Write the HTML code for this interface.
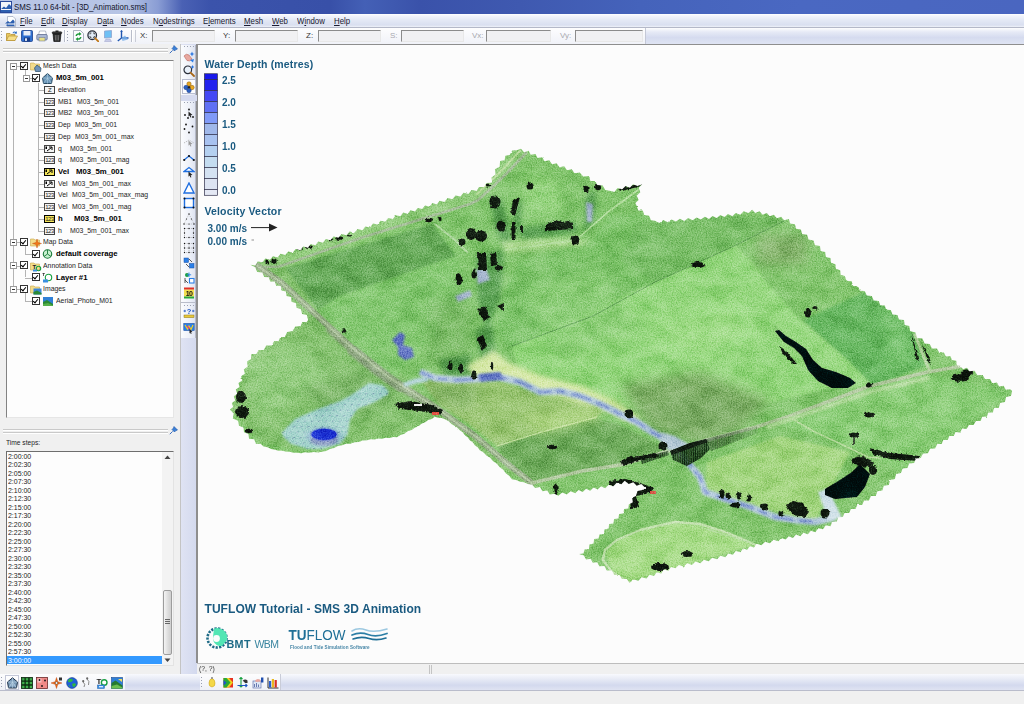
<!DOCTYPE html>
<html><head><meta charset="utf-8"><title>SMS 11.0 64-bit - [3D_Animation.sms]</title>
<style>
*{box-sizing:border-box}
html,body{margin:0;padding:0}
body{width:1024px;height:704px;overflow:hidden;position:relative;background:#f0f0f0;font-family:"Liberation Sans",sans-serif;font-size:9px;color:#222}
.abs{position:absolute}
#title{left:0;top:0;width:1024px;height:14px;background:linear-gradient(90deg,#b9c6e6 0,#b6c4e5 125px,#8a9dd4 158px,#4a61b4 182px,#3b53ab 210px,#3850a8 330px,#4460b6 365px,#3a52aa 420px,#3f59b0 520px,#4563bb 640px,#4a68c2 800px,#4a66c0 1024px)}
#title .t{left:14px;top:1px;font-size:9px;line-height:12px;color:#15152a;white-space:nowrap;transform:scaleX(.873);transform-origin:0 0}
#menubar{left:0;top:14px;width:1024px;height:14px;background:linear-gradient(180deg,#fff 0,#f2f4fb 15%,#e3e8f5 50%,#d9dff0 85%,#eef1f8 100%);border-bottom:1px solid #b4b8c8}
#menubar span{position:absolute;top:1px;font-size:9px;line-height:12px;color:#1a1a30;white-space:nowrap;transform:scaleX(.87);transform-origin:0 0}
#menubar u{text-decoration:underline}
#toolbar{left:0;top:28px;width:1024px;height:16px;background:linear-gradient(180deg,#fdfdfe 0,#e6eaf6 25%,#d5dbef 60%,#dfe4f3 100%)}
#toolbar .wl{position:absolute;left:0;top:0;width:646px;height:16px;background:linear-gradient(180deg,#fdfdfe 0,#f0f2f8 100%);border-right:1px solid #c4c8d6}
#toolbar .lbl{position:absolute;top:3px;font-size:8px;line-height:10px;color:#333}
#toolbar .lbl.dis{color:#a8a8b0}
#toolbar .inp{position:absolute;top:2px;height:12px;background:#f1f1f3;border-top:1px solid #8c8c8c;border-left:1px solid #8c8c8c;border-right:1px solid #e8e8e8;border-bottom:1px solid #e8e8e8}
#left{left:0;top:44px;width:180px;height:630px;background:#f0f0f0}
#tree{left:6px;top:60px;width:168px;height:358px;background:#fdfdfd;border-top:1px solid #828282;border-left:1px solid #828282;border-right:1px solid #e6e6e6;border-bottom:1px solid #e6e6e6}
.tr{position:absolute;white-space:nowrap;font-size:8px;line-height:10px;color:#333}
.tr.b{font-weight:bold;color:#000}
.cb{position:absolute;width:8px;height:8px;border:1px solid #333;background:#fff}
.cb:after{content:"";position:absolute;left:1px;top:0px;width:2px;height:4px;border-right:1.4px solid #000;border-bottom:1.4px solid #000;transform:rotate(40deg)}
.ex{position:absolute;width:7px;height:7px;border:1px solid #999;background:#fff}
.ex:after{content:"";position:absolute;left:1px;top:2px;width:3px;height:1px;background:#333}
.ic{position:absolute;width:11px;height:8px;border:1px solid #444;background:#f4f4f4;font-size:6px;line-height:6px;text-align:center;color:#222;letter-spacing:-0.5px;overflow:hidden}
.ic.y{background:#f2e45a}
#vsplit{left:179px;top:44px;width:2px;height:630px;background:#f0f0f0;border-right:1px solid #c4c4c4}
#vtool{left:181px;top:45px;width:15px;height:293px;background:linear-gradient(90deg,#fbfcfe 0,#eef1f8 60%,#dfe4f1 100%);border-right:1px solid #b5b9c8}
#vtoolbg{left:181px;top:44px;width:16px;height:630px;background:linear-gradient(90deg,#dfe3f3,#d3d9ee)}
#view{left:196px;top:44px;width:828px;height:619px;background:#fcfcfc;border-left:2px solid #8e8e8e;border-top:1px solid #8e8e8e}
#status{left:197px;top:663px;width:827px;height:11px;background:#f0f0f0;border-top:1px solid #bdbdbd}
#btool{left:0;top:674px;width:1024px;height:17px;background:linear-gradient(180deg,#f8f9fd 0,#e3e7f4 40%,#d3d9ee 70%,#dfe3f2 100%);border-bottom:1px solid #b9bccb}
#bottom{left:0;top:691px;width:1024px;height:13px;background:#f0f0f0}
.ts{position:absolute;left:8px;font-size:8px;line-height:8px;color:#222;white-space:nowrap;letter-spacing:-0.1px}
.lg{font-family:"Liberation Sans",sans-serif;font-weight:bold;fill:#1f5a82}
</style></head>
<body>
<div id="title" class="abs"><div class="abs t">SMS 11.0 64-bit - [3D_Animation.sms]</div></div>
<div id="menubar" class="abs">
<span style="left:20px"><u>F</u>ile</span><span style="left:41px"><u>E</u>dit</span><span style="left:62px"><u>D</u>isplay</span><span style="left:97px">D<u>a</u>ta</span><span style="left:121px"><u>N</u>odes</span><span style="left:153px">N<u>o</u>destrings</span><span style="left:203px">E<u>l</u>ements</span><span style="left:244px"><u>M</u>esh</span><span style="left:272px"><u>W</u>eb</span><span style="left:297px">W<u>i</u>ndow</span><span style="left:334px"><u>H</u>elp</span>
</div>
<div id="toolbar" class="abs"><div class="wl"></div>
<span class="lbl" style="left:140px">X:</span><div class="inp" style="left:152px;width:63px"></div>
<span class="lbl" style="left:223px">Y:</span><div class="inp" style="left:235px;width:63px"></div>
<span class="lbl" style="left:306px">Z:</span><div class="inp" style="left:318px;width:63px"></div>
<span class="lbl dis" style="left:390px">S:</span><div class="inp" style="left:401px;width:63px"></div>
<span class="lbl dis" style="left:472px">Vx:</span><div class="inp" style="left:486px;width:65px"></div>
<span class="lbl dis" style="left:560px">Vy:</span><div class="inp" style="left:575px;width:68px"></div>
</div>
<div id="left" class="abs"></div>
<div id="tree" class="abs"></div>
<div class="abs" style="left:3px;top:48px;width:165px;height:1px;background:#c9c9c9"></div><div class="abs" style="left:3px;top:49px;width:165px;height:1px;background:#fff"></div><div class="abs" style="left:3px;top:51px;width:165px;height:1px;background:#c9c9c9"></div><div class="abs" style="left:3px;top:52px;width:165px;height:1px;background:#fff"></div>
<svg class="abs" style="left:169px;top:45px" width="9" height="9" viewBox="0 0 9 9"><path d="M5,0.5 L8.5,4 L7,4.5 L5.5,6 L3,3.5 L4.5,2 Z" fill="#3b7fd6" stroke="#1d56a8" stroke-width=".6"/><path d="M3.6,5.4 L0.8,8.2" stroke="#3b6fc0" stroke-width="1"/></svg>
<div class="abs" style="left:3px;top:429px;width:165px;height:1px;background:#c9c9c9"></div><div class="abs" style="left:3px;top:430px;width:165px;height:1px;background:#fff"></div><div class="abs" style="left:3px;top:432px;width:165px;height:1px;background:#c9c9c9"></div><div class="abs" style="left:3px;top:433px;width:165px;height:1px;background:#fff"></div>
<svg class="abs" style="left:169px;top:426px" width="9" height="9" viewBox="0 0 9 9"><path d="M5,0.5 L8.5,4 L7,4.5 L5.5,6 L3,3.5 L4.5,2 Z" fill="#3b7fd6" stroke="#1d56a8" stroke-width=".6"/><path d="M3.6,5.4 L0.8,8.2" stroke="#3b6fc0" stroke-width="1"/></svg>
<div class="abs" style="left:13px;top:69.4px;width:1px;height:219.9px;background:#b4b4b4"></div>
<div class="abs" style="left:25px;top:70.4px;width:1px;height:4.7px;background:#b4b4b4"></div>
<div class="abs" style="left:38px;top:83.1px;width:1px;height:147.5px;background:#b4b4b4"></div>
<div class="abs" style="left:38px;top:89.9px;width:6px;height:1px;background:#b4b4b4"></div>
<div class="abs" style="left:38px;top:101.6px;width:6px;height:1px;background:#b4b4b4"></div>
<div class="abs" style="left:38px;top:113.3px;width:6px;height:1px;background:#b4b4b4"></div>
<div class="abs" style="left:38px;top:125.1px;width:6px;height:1px;background:#b4b4b4"></div>
<div class="abs" style="left:38px;top:136.8px;width:6px;height:1px;background:#b4b4b4"></div>
<div class="abs" style="left:38px;top:148.5px;width:6px;height:1px;background:#b4b4b4"></div>
<div class="abs" style="left:38px;top:160.2px;width:6px;height:1px;background:#b4b4b4"></div>
<div class="abs" style="left:38px;top:172.0px;width:6px;height:1px;background:#b4b4b4"></div>
<div class="abs" style="left:38px;top:183.7px;width:6px;height:1px;background:#b4b4b4"></div>
<div class="abs" style="left:38px;top:195.4px;width:6px;height:1px;background:#b4b4b4"></div>
<div class="abs" style="left:38px;top:207.2px;width:6px;height:1px;background:#b4b4b4"></div>
<div class="abs" style="left:38px;top:218.9px;width:6px;height:1px;background:#b4b4b4"></div>
<div class="abs" style="left:38px;top:230.6px;width:6px;height:1px;background:#b4b4b4"></div>
<div class="abs" style="left:16px;top:66.4px;width:4px;height:1px;background:#b4b4b4"></div>
<div class="abs" style="left:28px;top:78.1px;width:4px;height:1px;background:#b4b4b4"></div>
<div class="abs" style="left:13px;top:242.4px;width:3px;height:1px;background:#b4b4b4"></div>
<div class="abs" style="left:13px;top:265.8px;width:3px;height:1px;background:#b4b4b4"></div>
<div class="abs" style="left:13px;top:289.3px;width:3px;height:1px;background:#b4b4b4"></div>
<div class="abs" style="left:16px;top:242.4px;width:4px;height:1px;background:#b4b4b4"></div>
<div class="abs" style="left:16px;top:265.8px;width:4px;height:1px;background:#b4b4b4"></div>
<div class="abs" style="left:16px;top:289.3px;width:4px;height:1px;background:#b4b4b4"></div>
<div class="abs" style="left:25px;top:246.4px;width:1px;height:7.7px;background:#b4b4b4"></div>
<div class="abs" style="left:25px;top:254.1px;width:7px;height:1px;background:#b4b4b4"></div>
<div class="abs" style="left:25px;top:269.8px;width:1px;height:7.7px;background:#b4b4b4"></div>
<div class="abs" style="left:25px;top:277.5px;width:7px;height:1px;background:#b4b4b4"></div>
<div class="abs" style="left:25px;top:293.3px;width:1px;height:7.7px;background:#b4b4b4"></div>
<div class="abs" style="left:25px;top:301.0px;width:7px;height:1px;background:#b4b4b4"></div>
<div class="ex" style="left:10px;top:62.9px"></div>
<div class="cb" style="left:19.5px;top:61.9px"></div>
<svg class="abs" style="left:29.5px;top:61.4px" width="12" height="11" viewBox="0 0 12 11"><path d="M0.5,2 L4,2 L5,3 L9.5,3 L9.5,9 L0.5,9 Z" fill="#f3dc8a" stroke="#c9a94a" stroke-width=".6"/><path d="M7,4 L11,7 L10.5,10.5 L5.5,10.5 L4.5,7 Z" fill="#6f93b8" stroke="#244a66" stroke-width=".7"/></svg>
<span class="tr" style="left:43px;top:61.4px;font-size:8px;color:#1c1c1c;transform:scaleX(0.86);transform-origin:0 0;">Mesh Data</span>
<div class="ex" style="left:22.5px;top:74.6px"></div>
<div class="cb" style="left:32px;top:73.6px"></div>
<svg class="abs" style="left:42px;top:72.6px" width="11" height="11" viewBox="0 0 11 11"><path d="M5.5,0.5 L10.5,5 L9.5,10.5 L1.5,10.5 L0.5,5 Z" fill="#6a94b6" stroke="#1d4058" stroke-width=".9"/><path d="M5.5,0.5 L5.5,10.5 M0.5,5 L10.5,5 M1.5,10.5 L5.5,5 L9.5,10.5" stroke="#b8d8e8" stroke-width=".5" fill="none"/></svg>
<span class="tr b" style="left:56px;top:73.1px;font-size:8px;color:#000;transform:scaleX(0.97);transform-origin:0 0;">M03_5m_001</span>
<div class="ic" style="left:44px;top:85.9px;">Z</div>
<span class="tr" style="left:57.7px;top:84.9px;font-size:8px;color:#1c1c1c;transform:scaleX(0.86);transform-origin:0 0;">elevation</span>
<div class="ic" style="left:44px;top:97.6px;">123</div>
<span class="tr" style="left:57.7px;top:96.6px;font-size:8px;color:#1c1c1c;transform:scaleX(0.86);transform-origin:0 0;">MB1</span>
<span class="tr" style="left:76.5px;top:96.6px;font-size:8px;color:#1c1c1c;transform:scaleX(0.86);transform-origin:0 0;">M03_5m_001</span>
<div class="ic" style="left:44px;top:109.3px;">123</div>
<span class="tr" style="left:57.7px;top:108.3px;font-size:8px;color:#1c1c1c;transform:scaleX(0.86);transform-origin:0 0;">MB2</span>
<span class="tr" style="left:76.5px;top:108.3px;font-size:8px;color:#1c1c1c;transform:scaleX(0.86);transform-origin:0 0;">M03_5m_001</span>
<div class="ic" style="left:44px;top:121.1px;">123</div>
<span class="tr" style="left:57.7px;top:120.1px;font-size:8px;color:#1c1c1c;transform:scaleX(0.86);transform-origin:0 0;">Dep</span>
<span class="tr" style="left:75.1px;top:120.1px;font-size:8px;color:#1c1c1c;transform:scaleX(0.86);transform-origin:0 0;">M03_5m_001</span>
<div class="ic" style="left:44px;top:132.8px;">123</div>
<span class="tr" style="left:57.7px;top:131.8px;font-size:8px;color:#1c1c1c;transform:scaleX(0.86);transform-origin:0 0;">Dep</span>
<span class="tr" style="left:75.1px;top:131.8px;font-size:8px;color:#1c1c1c;transform:scaleX(0.86);transform-origin:0 0;">M03_5m_001_max</span>
<div class="ic" style="left:44px;top:144.5px;"><svg width="9" height="6" viewBox="0 0 9 6" style="display:block"><path d="M2,5 L6.5,1.5 M4,1 L7,1 L7,4" stroke="#000" stroke-width="1" fill="none"/><rect x="0.5" y="0.5" width="1.5" height="2.5" fill="#000"/></svg></div>
<span class="tr" style="left:57.7px;top:143.5px;font-size:8px;color:#1c1c1c;transform:scaleX(0.86);transform-origin:0 0;">q</span>
<span class="tr" style="left:69.6px;top:143.5px;font-size:8px;color:#1c1c1c;transform:scaleX(0.86);transform-origin:0 0;">M03_5m_001</span>
<div class="ic" style="left:44px;top:156.2px;">123</div>
<span class="tr" style="left:57.7px;top:155.2px;font-size:8px;color:#1c1c1c;transform:scaleX(0.86);transform-origin:0 0;">q</span>
<span class="tr" style="left:69.6px;top:155.2px;font-size:8px;color:#1c1c1c;transform:scaleX(0.86);transform-origin:0 0;">M03_5m_001_mag</span>
<div class="ic y" style="left:44px;top:168.0px;border-color:#000;"><svg width="9" height="6" viewBox="0 0 9 6" style="display:block"><path d="M2,5 L6.5,1.5 M4,1 L7,1 L7,4" stroke="#000" stroke-width="1" fill="none"/><rect x="0.5" y="0.5" width="1.5" height="2.5" fill="#000"/></svg></div>
<span class="tr b" style="left:57.7px;top:167.0px;font-size:8px;color:#000;transform:scaleX(0.97);transform-origin:0 0;">Vel</span>
<span class="tr b" style="left:75.5px;top:167.0px;font-size:8px;color:#000;transform:scaleX(0.97);transform-origin:0 0;">M03_5m_001</span>
<div class="ic" style="left:44px;top:179.7px;"><svg width="9" height="6" viewBox="0 0 9 6" style="display:block"><path d="M2,5 L6.5,1.5 M4,1 L7,1 L7,4" stroke="#000" stroke-width="1" fill="none"/><rect x="0.5" y="0.5" width="1.5" height="2.5" fill="#000"/></svg></div>
<span class="tr" style="left:57.7px;top:178.7px;font-size:8px;color:#1c1c1c;transform:scaleX(0.86);transform-origin:0 0;">Vel</span>
<span class="tr" style="left:72.3px;top:178.7px;font-size:8px;color:#1c1c1c;transform:scaleX(0.86);transform-origin:0 0;">M03_5m_001_max</span>
<div class="ic" style="left:44px;top:191.4px;">123</div>
<span class="tr" style="left:57.7px;top:190.4px;font-size:8px;color:#1c1c1c;transform:scaleX(0.86);transform-origin:0 0;">Vel</span>
<span class="tr" style="left:72.3px;top:190.4px;font-size:8px;color:#1c1c1c;transform:scaleX(0.86);transform-origin:0 0;">M03_5m_001_max_mag</span>
<div class="ic" style="left:44px;top:203.2px;">123</div>
<span class="tr" style="left:57.7px;top:202.2px;font-size:8px;color:#1c1c1c;transform:scaleX(0.86);transform-origin:0 0;">Vel</span>
<span class="tr" style="left:72.3px;top:202.2px;font-size:8px;color:#1c1c1c;transform:scaleX(0.86);transform-origin:0 0;">M03_5m_001_mag</span>
<div class="ic y" style="left:44px;top:214.9px;border-color:#000;">123</div>
<span class="tr b" style="left:57.7px;top:213.9px;font-size:8px;color:#000;transform:scaleX(0.97);transform-origin:0 0;">h</span>
<span class="tr b" style="left:74px;top:213.9px;font-size:8px;color:#000;transform:scaleX(0.97);transform-origin:0 0;">M03_5m_001</span>
<div class="ic" style="left:44px;top:226.6px;">123</div>
<span class="tr" style="left:57.7px;top:225.6px;font-size:8px;color:#1c1c1c;transform:scaleX(0.86);transform-origin:0 0;">h</span>
<span class="tr" style="left:70px;top:225.6px;font-size:8px;color:#1c1c1c;transform:scaleX(0.86);transform-origin:0 0;">M03_5m_001_max</span>
<div class="ex" style="left:10px;top:238.9px"></div>
<div class="cb" style="left:19.5px;top:237.9px"></div>
<svg class="abs" style="left:29.5px;top:237.4px" width="12" height="11" viewBox="0 0 12 11"><path d="M0.5,2 L4,2 L5,3 L9.5,3 L9.5,9 L0.5,9 Z" fill="#f3dc8a" stroke="#c9a94a" stroke-width=".6"/><path d="M7,2 L8,5.5 L11.5,6.5 L8,7.5 L7,11 L6,7.5 L2.5,6.5 L6,5.5 Z" fill="#f07818" stroke="#c04808" stroke-width=".4"/></svg>
<span class="tr" style="left:43px;top:237.4px;font-size:8px;color:#1c1c1c;transform:scaleX(0.86);transform-origin:0 0;">Map Data</span>
<div class="cb" style="left:32px;top:249.6px"></div>
<svg class="abs" style="left:42px;top:249.1px" width="11" height="10" viewBox="0 0 11 10"><circle cx="5.5" cy="5" r="4.2" fill="#c8f0d0" stroke="#187838" stroke-width="1.1"/><path d="M5.5,1 L5.5,5 L2,7.5 M5.5,5 L9,7.5" stroke="#187838" stroke-width=".9" fill="none"/></svg>
<span class="tr b" style="left:55.7px;top:249.1px;font-size:8px;color:#000;transform:scaleX(0.97);transform-origin:0 0;">default coverage</span>
<div class="ex" style="left:10px;top:262.3px"></div>
<div class="cb" style="left:19.5px;top:261.3px"></div>
<svg class="abs" style="left:29.5px;top:260.8px" width="12" height="11" viewBox="0 0 12 11"><path d="M0.5,2 L4,2 L5,3 L9.5,3 L9.5,9 L0.5,9 Z" fill="#f3dc8a" stroke="#c9a94a" stroke-width=".6"/><text x="2.5" y="8" font-size="6" font-family="Liberation Sans, sans-serif" font-weight="bold" fill="#222">T</text><circle cx="8.5" cy="7.5" r="2.2" fill="none" stroke="#18a040" stroke-width="1.1"/><rect x="3" y="8.5" width="4" height="2" fill="#3a8fe0"/></svg>
<span class="tr" style="left:43px;top:260.8px;font-size:8px;color:#1c1c1c;transform:scaleX(0.86);transform-origin:0 0;">Annotation Data</span>
<div class="cb" style="left:32px;top:273.0px"></div>
<svg class="abs" style="left:42px;top:272.5px" width="11" height="10" viewBox="0 0 11 10"><circle cx="6.5" cy="4.5" r="3.2" fill="#fff" stroke="#18a040" stroke-width="1.1"/><rect x="1" y="6.5" width="5" height="3" fill="#3a8fe0"/><path d="M0.5,0.5 L2.5,0.5 L1.5,0.5 L1.5,3" stroke="#222" stroke-width=".7" fill="none"/></svg>
<span class="tr b" style="left:55.7px;top:272.5px;font-size:8px;color:#000;transform:scaleX(0.97);transform-origin:0 0;">Layer #1</span>
<div class="ex" style="left:10px;top:285.8px"></div>
<div class="cb" style="left:19.5px;top:284.8px"></div>
<svg class="abs" style="left:29.5px;top:284.3px" width="12" height="11" viewBox="0 0 12 11"><path d="M0.5,2 L4,2 L5,3 L9.5,3 L9.5,9 L0.5,9 Z" fill="#f3dc8a" stroke="#c9a94a" stroke-width=".6"/><rect x="3.5" y="4.5" width="8" height="6" fill="#3a86d8"/><path d="M3.5,10.5 L3.5,8 L7,6.5 L11.5,9 L11.5,10.5 Z" fill="#2c8a36"/></svg>
<span class="tr" style="left:43px;top:284.3px;font-size:8px;color:#1c1c1c;transform:scaleX(0.86);transform-origin:0 0;">Images</span>
<div class="cb" style="left:32px;top:296.5px"></div>
<svg class="abs" style="left:42.5px;top:296.5px" width="10" height="9" viewBox="0 0 10 9"><rect x="0" y="0" width="10" height="9" fill="#2f7fd6"/><path d="M0,9 L0,5 L4,3 L10,7 L10,9 Z" fill="#2a8a34"/><path d="M0,9 L0,7 L5,6 L10,8.5 L10,9 Z" fill="#56b04a"/></svg>
<span class="tr" style="left:55.7px;top:296.0px;font-size:8px;color:#1c1c1c;transform:scaleX(0.86);transform-origin:0 0;">Aerial_Photo_M01</span>
<span class="tr" style="left:6.4px;top:438.2px;font-size:8px;color:#222;transform:scaleX(0.83);transform-origin:0 0;">Time steps:</span>
<div class="abs" style="left:6px;top:451px;width:168px;height:215px;background:#fdfdfd;border-top:1px solid #6e6e6e;border-left:1px solid #6e6e6e;border-right:1px solid #e3e3e3;border-bottom:1px solid #e3e3e3"></div>
<div class="abs" style="left:162px;top:452px;width:11px;height:213px;background:#f3f3f3"></div>
<div class="abs" style="left:163px;top:590px;width:9px;height:65px;background:linear-gradient(90deg,#f4f4f4,#dcdcdc 60%,#cfcfcf);border:1px solid #9c9c9c;border-radius:2px"></div>
<div class="abs" style="left:165px;top:619px;width:5px;height:1px;background:#666;box-shadow:0 2px 0 #666,0 4px 0 #666"></div>
<svg class="abs" style="left:164px;top:455px" width="7" height="5"><path d="M0.5,4 L3.5,0.5 L6.5,4 Z" fill="#444"/></svg><svg class="abs" style="left:164px;top:658px" width="7" height="5"><path d="M0.5,0.5 L3.5,4 L6.5,0.5 Z" fill="#444"/></svg>
<div class="abs" style="left:7px;top:656px;width:155px;height:8px;background:#3399ff"></div>
<span class="tr" style="left:8.4px;top:451.8px;font-size:8px;color:#222;transform:scaleX(0.87);transform-origin:0 0;">2:00:00</span>
<span class="tr" style="left:8.4px;top:460.3px;font-size:8px;color:#222;transform:scaleX(0.87);transform-origin:0 0;">2:02:30</span>
<span class="tr" style="left:8.4px;top:468.8px;font-size:8px;color:#222;transform:scaleX(0.87);transform-origin:0 0;">2:05:00</span>
<span class="tr" style="left:8.4px;top:477.3px;font-size:8px;color:#222;transform:scaleX(0.87);transform-origin:0 0;">2:07:30</span>
<span class="tr" style="left:8.4px;top:485.8px;font-size:8px;color:#222;transform:scaleX(0.87);transform-origin:0 0;">2:10:00</span>
<span class="tr" style="left:8.4px;top:494.2px;font-size:8px;color:#222;transform:scaleX(0.87);transform-origin:0 0;">2:12:30</span>
<span class="tr" style="left:8.4px;top:502.7px;font-size:8px;color:#222;transform:scaleX(0.87);transform-origin:0 0;">2:15:00</span>
<span class="tr" style="left:8.4px;top:511.2px;font-size:8px;color:#222;transform:scaleX(0.87);transform-origin:0 0;">2:17:30</span>
<span class="tr" style="left:8.4px;top:519.7px;font-size:8px;color:#222;transform:scaleX(0.87);transform-origin:0 0;">2:20:00</span>
<span class="tr" style="left:8.4px;top:528.2px;font-size:8px;color:#222;transform:scaleX(0.87);transform-origin:0 0;">2:22:30</span>
<span class="tr" style="left:8.4px;top:536.7px;font-size:8px;color:#222;transform:scaleX(0.87);transform-origin:0 0;">2:25:00</span>
<span class="tr" style="left:8.4px;top:545.2px;font-size:8px;color:#222;transform:scaleX(0.87);transform-origin:0 0;">2:27:30</span>
<span class="tr" style="left:8.4px;top:553.7px;font-size:8px;color:#222;transform:scaleX(0.87);transform-origin:0 0;">2:30:00</span>
<span class="tr" style="left:8.4px;top:562.2px;font-size:8px;color:#222;transform:scaleX(0.87);transform-origin:0 0;">2:32:30</span>
<span class="tr" style="left:8.4px;top:570.7px;font-size:8px;color:#222;transform:scaleX(0.87);transform-origin:0 0;">2:35:00</span>
<span class="tr" style="left:8.4px;top:579.1px;font-size:8px;color:#222;transform:scaleX(0.87);transform-origin:0 0;">2:37:30</span>
<span class="tr" style="left:8.4px;top:587.6px;font-size:8px;color:#222;transform:scaleX(0.87);transform-origin:0 0;">2:40:00</span>
<span class="tr" style="left:8.4px;top:596.1px;font-size:8px;color:#222;transform:scaleX(0.87);transform-origin:0 0;">2:42:30</span>
<span class="tr" style="left:8.4px;top:604.6px;font-size:8px;color:#222;transform:scaleX(0.87);transform-origin:0 0;">2:45:00</span>
<span class="tr" style="left:8.4px;top:613.1px;font-size:8px;color:#222;transform:scaleX(0.87);transform-origin:0 0;">2:47:30</span>
<span class="tr" style="left:8.4px;top:621.6px;font-size:8px;color:#222;transform:scaleX(0.87);transform-origin:0 0;">2:50:00</span>
<span class="tr" style="left:8.4px;top:630.1px;font-size:8px;color:#222;transform:scaleX(0.87);transform-origin:0 0;">2:52:30</span>
<span class="tr" style="left:8.4px;top:638.6px;font-size:8px;color:#222;transform:scaleX(0.87);transform-origin:0 0;">2:55:00</span>
<span class="tr" style="left:8.4px;top:647.1px;font-size:8px;color:#222;transform:scaleX(0.87);transform-origin:0 0;">2:57:30</span>
<span class="tr" style="left:8.4px;top:655.6px;font-size:8px;color:#fff;transform:scaleX(0.87);transform-origin:0 0;">3:00:00</span>
<div id="vsplit" class="abs"></div>
<div id="vtoolbg" class="abs"></div>
<div id="vtool" class="abs"></div>
<div id="view" class="abs"></div>
<svg class="abs" style="left:0;top:0" width="1024" height="704" viewBox="0 0 1024 704">
<defs>
<path id="outline" d="M250.5,264.8 L255.2,265.5 L257.8,261.5 L262.4,262.2 L265.4,258.6 L270.0,259.8 L273.0,256.2 L277.6,257.4 L280.6,253.8 L285.2,255.0 L288.2,251.4 L292.8,252.6 L295.8,249.0 L300.4,250.2 L303.3,246.5 L307.9,247.7 L310.8,244.0 L315.4,245.2 L318.3,241.5 L322.9,242.7 L325.8,239.0 L330.4,240.2 L333.6,236.5 L338.4,237.7 L341.6,234.0 L346.4,235.2 L349.6,231.5 L354.4,232.7 L357.6,229.0 L362.4,230.2 L365.4,226.4 L370.0,227.4 L373.0,223.6 L377.6,224.6 L380.6,220.8 L385.2,221.8 L388.2,218.0 L392.8,219.0 L395.8,215.2 L400.4,216.2 L403.2,212.6 L407.7,213.9 L410.5,210.2 L414.9,211.5 L417.8,207.9 L422.2,209.1 L425.1,205.5 L429.5,206.8 L432.3,203.1 L436.8,204.4 L439.6,200.8 L444.4,201.9 L447.6,198.1 L452.4,199.2 L455.6,195.4 L460.4,196.6 L463.6,192.8 L468.4,193.9 L471.6,190.1 L476.6,191.1 L479.1,186.9 L484.1,187.1 L486.6,182.9 L492.2,182.5 L491.5,177.5 L495.5,174.5 L494.9,169.3 L499.6,166.7 L500.1,161.1 L504.6,160.3 L505.4,155.7 L509.7,155.1 L512.3,150.4 L516.7,150.3 L521.0,148.7 L524.0,152.3 L528.6,150.8 L530.8,154.8 L535.4,154.0 L537.6,158.0 L542.2,157.2 L544.5,161.2 L549.2,160.3 L552.0,164.2 L556.7,163.3 L559.5,167.2 L564.2,166.3 L567.0,170.2 L571.7,169.3 L574.5,173.2 L579.8,172.5 L583.2,176.5 L588.9,176.1 L590.4,181.1 L595.1,180.9 L597.3,185.1 L602.7,185.4 L605.2,190.0 L609.6,190.8 L614.4,191.9 L617.6,188.1 L622.3,189.3 L625.5,185.9 L629.9,187.7 L633.1,184.3 L637.5,186.1 L642.3,184.3 L638.7,187.7 L640.3,192.3 L636.7,195.8 L638.6,199.9 L635.4,203.1 L636.8,206.0 L638.2,210.4 L642.8,210.6 L644.2,215.0 L649.1,215.7 L650.9,220.3 L654.9,220.7 L659.3,223.0 L663.2,220.0 L667.6,222.3 L671.6,219.4 L675.9,221.6 L679.9,218.7 L684.3,221.0 L688.2,218.0 L692.6,220.3 L696.6,217.4 L700.9,219.6 L704.9,216.7 L709.0,218.9 L712.6,215.9 L716.7,218.0 L720.3,215.0 L724.4,217.1 L728.0,214.1 L732.3,216.3 L735.7,212.9 L740.3,214.7 L743.7,211.3 L748.3,213.1 L752.3,209.7 L755.3,213.1 L759.5,211.3 L762.5,214.7 L766.7,212.9 L769.7,216.3 L773.9,214.7 L776.9,218.3 L781.1,216.7 L784.1,220.3 L788.9,219.0 L790.1,223.6 L794.9,224.2 L796.1,228.8 L800.9,229.4 L802.1,234.0 L807.1,234.8 L808.5,239.6 L813.5,240.4 L814.9,245.2 L820.0,246.1 L820.6,250.9 L825.2,252.1 L825.8,256.9 L830.4,258.1 L831.0,262.8 L835.4,264.2 L835.8,268.8 L840.2,270.2 L840.6,274.8 L844.8,276.0 L846.5,280.7 L851.5,281.3 L853.3,286.1 L858.1,286.3 L859.9,290.7 L864.8,290.9 L866.7,295.6 L871.8,295.9 L873.7,300.6 L878.8,301.0 L880.2,305.3 L884.8,305.5 L886.2,309.8 L890.8,310.0 L892.5,314.5 L897.3,315.0 L899.0,319.5 L904.0,320.1 L904.7,324.9 L909.3,326.1 L910.1,330.9 L915.4,332.6 L917.2,338.1 L922.4,338.6 L924.6,343.4 L929.7,343.9 L932.0,348.4 L937.0,348.6 L939.4,353.1 L943.9,352.6 L945.9,356.6 L950.4,356.1 L952.0,359.9 L956.3,360.8 L956.7,365.2 L960.4,365.8 L963.0,369.2 L967.0,367.8 L969.4,371.2 L974.6,370.8 L977.4,375.2 L982.6,374.9 L985.0,379.1 L990.0,378.9 L992.4,383.2 L996.9,382.5 L999.1,386.5 L1003.6,385.8 L1005.8,389.8 L1010.2,389.2 L1012.1,391.1 L1010.9,395.9 L1006.1,397.1 L1004.9,401.9 L1000.1,403.1 L998.8,408.1 L994.2,408.1 L992.8,412.4 L988.2,412.4 L986.8,416.7 L982.2,416.8 L980.6,421.1 L975.9,420.9 L973.6,425.1 L968.9,424.9 L966.6,429.1 L962.1,428.6 L960.1,432.6 L955.6,432.1 L953.7,436.1 L949.3,435.9 L947.7,440.1 L943.3,439.9 L941.7,444.1 L937.3,443.9 L935.1,448.5 L930.1,448.7 L927.9,453.3 L922.9,453.5 L920.8,458.0 L915.9,458.5 L914.1,463.0 L909.2,463.5 L907.4,468.0 L902.6,468.5 L900.9,472.9 L896.1,474.1 L894.9,478.9 L890.1,480.1 L888.8,485.0 L883.9,485.8 L882.3,490.5 L877.4,491.3 L875.7,496.1 L870.9,496.1 L868.9,500.5 L864.1,500.5 L862.1,504.9 L857.3,504.9 L855.5,509.1 L850.9,508.9 L849.1,513.1 L844.5,512.9 L842.8,517.0 L838.2,517.2 L836.8,521.5 L832.2,521.7 L830.5,526.2 L825.8,525.3 L823.0,529.2 L818.3,528.3 L815.3,532.3 L810.9,530.7 L807.8,534.3 L803.4,532.7 L800.3,536.3 L796.0,534.6 L793.0,537.9 L788.7,536.2 L785.6,539.6 L781.4,537.9 L778.3,541.3 L773.5,539.7 L769.9,543.3 L765.1,541.7 L761.5,545.3 L756.6,543.8 L754.0,547.4 L749.8,546.2 L747.2,549.8 L743.0,548.6 L740.4,552.2 L735.8,551.0 L732.9,554.7 L728.3,553.5 L725.3,557.3 L720.5,555.7 L717.0,559.3 L712.2,557.7 L708.6,561.3 L703.9,559.7 L700.3,563.3 L695.6,561.6 L691.9,564.9 L687.2,563.2 L683.6,566.6 L678.9,564.9 L675.4,568.2 L671.0,567.1 L668.3,570.8 L663.8,569.6 L661.2,573.4 L656.7,572.2 L654.0,575.9 L649.6,574.8 L646.4,578.4 L641.6,577.2 L638.4,580.8 L633.6,579.6 L629.4,583.1 L626.9,578.9 L621.9,579.1 L619.4,574.9 L614.3,575.1 L611.9,570.6 L606.8,570.6 L604.4,566.1 L599.4,566.2 L597.2,562.2 L592.8,562.8 L590.6,558.8 L586.1,559.5 L583.9,555.5 L579.1,554.0 L583.5,553.6 L584.5,549.4 L589.0,548.9 L589.4,544.5 L593.6,543.5 L594.1,539.0 L598.5,538.6 L599.5,534.4 L604.0,533.9 L604.4,529.5 L608.6,528.5 L609.1,524.1 L613.4,523.4 L614.1,519.1 L618.4,518.4 L619.1,514.1 L623.4,513.4 L624.1,509.1 L628.4,508.4 L628.8,504.4 L632.8,502.2 L632.2,497.8 L635.9,496.0 L637.5,491.0 L642.5,490.0 L644.7,487.3 L641.3,483.9 L636.7,485.7 L633.3,482.3 L628.7,484.1 L624.7,480.7 L621.3,484.3 L616.7,482.7 L613.3,486.3 L608.7,484.7 L605.2,488.3 L601.0,486.3 L597.7,489.5 L593.5,487.6 L590.2,490.8 L586.0,488.8 L582.7,492.0 L578.5,490.1 L575.2,493.3 L570.6,491.3 L566.8,494.5 L562.2,492.5 L558.4,495.7 L554.5,493.8 L549.8,494.5 L547.2,490.5 L542.5,491.2 L539.9,487.1 L535.1,487.9 L532.1,484.7 L527.9,484.1 L524.1,482.3 L519.9,481.7 L516.1,479.9 L511.8,479.2 L509.2,475.8 L505.8,473.2 L503.2,469.8 L499.8,467.3 L496.9,463.7 L493.1,461.3 L490.2,457.7 L486.4,455.6 L483.6,452.4 L479.8,450.2 L477.7,447.3 L474.8,445.2 L472.7,442.3 L469.8,440.2 L467.7,437.3 L464.8,435.2 L462.7,432.3 L459.8,430.3 L456.2,426.7 L451.8,424.3 L448.7,421.2 L444.9,419.3 L441.7,418.0 L438.3,418.0 L434.8,416.7 L431.8,419.0 L428.2,420.0 L425.2,422.3 L421.5,423.7 L418.5,426.3 L414.8,427.7 L411.6,430.1 L407.6,431.3 L404.4,433.7 L400.4,434.9 L397.0,437.3 L393.2,437.0 L389.5,438.1 L385.7,437.8 L382.0,438.8 L378.2,438.5 L374.5,439.6 L370.7,439.3 L367.1,440.3 L362.8,440.5 L358.7,442.0 L354.4,442.2 L350.4,443.7 L346.1,443.8 L342.1,445.3 L337.9,446.1 L334.1,448.1 L329.9,448.9 L326.1,450.9 L322.0,451.7 L317.8,452.5 L313.7,452.0 L309.5,452.8 L305.3,452.3 L301.2,453.2 L297.0,452.7 L293.3,452.8 L289.7,451.7 L286.0,451.8 L282.4,450.7 L278.6,450.8 L275.1,449.7 L271.1,449.1 L267.6,447.2 L263.6,446.6 L260.7,443.9 L255.9,443.7 L254.1,439.3 L249.0,438.8 L248.5,434.0 L244.0,432.3 L243.5,427.5 L239.0,425.8 L238.0,420.7 L232.8,418.5 L233.7,413.5 L229.8,409.6 L233.2,407.0 L231.8,403.0 L235.2,400.4 L233.8,396.3 L237.2,393.7 L235.8,389.5 L239.5,387.1 L238.5,382.9 L242.2,380.5 L241.1,376.2 L244.9,373.8 L243.8,369.5 L247.7,366.5 L246.9,361.4 L251.1,359.1 L251.4,353.9 L256.3,354.1 L258.7,349.9 L263.7,350.1 L266.3,345.5 L271.7,345.5 L274.3,340.9 L278.7,341.1 L280.3,336.9 L284.8,337.0 L287.2,332.0 L292.7,331.1 L295.3,326.4 L300.7,326.1 L302.3,321.9 L306.7,322.1 L308.1,319.9 L306.9,315.1 L302.1,313.9 L301.0,309.2 L296.5,307.8 L296.0,303.2 L291.5,301.8 L291.0,297.1 L286.5,296.1 L286.0,291.6 L281.5,290.6 L280.8,286.0 L276.2,285.8 L274.8,281.6 L270.2,281.4 L268.8,277.2 L264.2,277.1 L262.3,272.4 L257.2,272.1 L255.3,267.4 Z"/>
<filter id="grain" x="0" y="0" width="100%" height="100%" color-interpolation-filters="sRGB"><feTurbulence type="fractalNoise" baseFrequency="0.8" numOctaves="2" seed="3" result="n"/><feColorMatrix in="n" type="matrix" values="1.6 0 0 0 -0.3  1.6 0 0 0 -0.3  1.6 0 0 0 -0.3  0 0 0 0 1"/></filter>
<filter id="mottle" x="0" y="0" width="100%" height="100%" color-interpolation-filters="sRGB"><feTurbulence type="fractalNoise" baseFrequency="0.045 0.07" numOctaves="3" seed="21" result="n"/><feColorMatrix in="n" type="matrix" values="1.9 0 0 0 -0.43  1.9 0 0 0 -0.43  1.9 0 0 0 -0.43  0 0 0 0 1"/></filter>
<filter id="rough" x="-10%" y="-10%" width="120%" height="120%"><feTurbulence type="fractalNoise" baseFrequency="0.3" numOctaves="2" seed="7" result="t"/><feDisplacementMap in="SourceGraphic" in2="t" scale="3.5" xChannelSelector="R" yChannelSelector="G" result="d"/><feGaussianBlur in="d" stdDeviation="0.45"/></filter>
<filter id="jag" x="-5%" y="-5%" width="110%" height="110%"><feTurbulence type="fractalNoise" baseFrequency="0.35" numOctaves="1" seed="11" result="t"/><feDisplacementMap in="SourceGraphic" in2="t" scale="2" xChannelSelector="R" yChannelSelector="G"/></filter>
<mask id="tm" maskUnits="userSpaceOnUse" x="200" y="130" width="824" height="470"><use href="#outline" fill="#fff" filter="url(#jag)"/></mask>
<radialGradient id="pondg"><stop offset="0" stop-color="#90a8dc"/><stop offset=".6" stop-color="#9cbcd8" stop-opacity=".7"/><stop offset="1" stop-color="#a5d4cd" stop-opacity="0"/></radialGradient>
<pattern id="dots" width="7" height="5.5" patternUnits="userSpaceOnUse" patternTransform="translate(282,430) skewX(-35)"><path d="M2,2.5 L3.6,2" stroke="#6c84a8" stroke-width=".9"/></pattern>
<pattern id="streak" width="2.2" height="8" patternUnits="userSpaceOnUse"><rect x="0" y="0" width="1.2" height="8" fill="#0c200c"/><rect x="1.2" y="0" width="1" height="8" fill="#2c5a2a"/></pattern>
<linearGradient id="fadeR" x1="0" x2="1" y1="0" y2="0"><stop offset="0" stop-color="#fff" stop-opacity="1"/><stop offset="1" stop-color="#fff" stop-opacity="0.1"/></linearGradient>
<mask id="fm" maskUnits="userSpaceOnUse" x="700" y="420" width="70" height="40"><rect x="700" y="420" width="70" height="40" fill="url(#fadeR)"/></mask>
<filter id="b05"><feGaussianBlur stdDeviation="0.6"/></filter>
<filter id="b1"><feGaussianBlur stdDeviation="1.2"/></filter>
<filter id="b2"><feGaussianBlur stdDeviation="2.5"/></filter>
<filter id="b5"><feGaussianBlur stdDeviation="6"/></filter>
<filter id="b10"><feGaussianBlur stdDeviation="12"/></filter>
</defs>
<g mask="url(#tm)">
<rect x="220" y="140" width="800" height="450" fill="#84c66e"/>
<!-- fields -->
<g filter="url(#b1)">
<polygon points="251,266 285,268 340,318 440,408 532,485 500,467 435,417 397,434 297,450 260,441 231,410 252,355 309,319" fill="#87c370"/>
<polygon points="251,266 476,190 517,149 530,152 480,200 285,268" fill="#92cc7c"/>
<polygon points="285,268 432,224 456,256 340,296 318,310" fill="#68ac5a"/>
<polygon points="318,310 340,296 456,256 470,290 440,330 395,378 380,372" fill="#84c870"/>
<polygon points="512,347 655,282 735,245 760,270 775,330 810,365 830,388 760,405 700,395 640,410 610,400 560,385 520,375" fill="#94d67c"/>
<polygon points="508,347 512,346 655,281 637,222 655,222 645,214 610,215 590,242 560,250 520,262 500,300 500,335" fill="#7ec46a"/>
<polygon points="637,222 732,215 788,220 782,222 735,245 655,282 620,260" fill="#7cc069"/>
<polygon points="735,287 760,275 800,320 850,362 873,386 830,388 800,350 770,320" fill="#98d880"/>
<polygon points="803,320 864,292 903,321 915,337 925,366 873,386 850,362" fill="#69b962"/>
<polygon points="768,423 870,388 928,374 1013,392 953,435 900,472 870,455 800,430" fill="#8cce78"/>
<polygon points="707,462 780,436 850,452 830,490 815,522 760,508 705,492" fill="#a4d680"/>
<polygon points="420,380 502,382 540,395 580,400 602,412 595,418 545,431 497,446 470,425 440,405" fill="#9bc673"/>
<polygon points="497,446 545,431 595,418 620,425 660,445 665,452 620,465 535,481 512,470" fill="#73af5f"/>
<polygon points="605,552 617,540 640,530 675,522 700,525 725,532 756,545 700,562 650,576 630,582 612,572" fill="#a8dc88"/>
</g>
<!-- broad shading -->
<g filter="url(#b5)">
<polygon points="620,385 700,372 770,400 740,430 700,445 650,430" fill="#7eae66" opacity=".95"/>
<polygon points="660,310 740,295 770,340 700,370 650,350" fill="#a0dc87" opacity=".9"/>
<polygon points="757,235 807,235 807,265 757,265" fill="#8cb472" opacity=".8"/>
<polygon points="240,360 300,340 330,380 260,420" fill="#98d084" opacity=".7"/>
<polygon points="300,390 360,370 400,400 340,420" fill="#80b86a" opacity=".8"/>
<polygon points="520,290 600,270 640,330 560,360" fill="#90d07a" opacity=".8"/>
<polygon points="430,300 470,300 470,370 430,370" fill="#7cba66" opacity=".8"/>
<polygon points="520,170 560,180 565,215 525,215" fill="#96d47e" opacity=".9"/>
<polygon points="520,415 600,405 600,420 540,435" fill="#b4d888" opacity=".8"/>
<polygon points="425,383 480,385 470,410 440,405" fill="#86b468" opacity=".8"/>
<polygon points="880,300 905,322 920,360 890,375" fill="#7cc672" opacity=".8"/>
</g>
<!-- gully shadows -->
<g filter="url(#b2)" fill="#4c9448" opacity=".75">
<path d="M490,195 L502,200 L512,240 L505,250 L496,230 Z"/>
<path d="M514,205 L522,198 L520,230 L514,240 Z"/>
<path d="M520,228 L575,222 L578,232 L522,240 Z"/>
<path d="M586,195 L596,190 L594,222 L584,232 Z"/>
<path d="M476,255 L504,250 L500,300 L486,330 L478,300 Z"/>
<path d="M476,330 L492,325 L496,360 L482,368 Z"/>
<path d="M440,360 L470,355 L472,376 L445,378 Z"/>
</g>
<!-- light hillside -->
<g filter="url(#b2)">
<polygon points="466,366 494,350 508,362 542,376 582,386 616,401 640,418 634,424 604,410 540,392 500,378 476,378" fill="#d6e8a8"/>
<polygon points="500,241 578,238 590,244 506,254" fill="#b4dc98"/>
</g>
<!-- roads -->
<g fill="none" stroke-linecap="round" stroke-linejoin="round">
<path d="M264,267 L279,266.5 L362,237.5 L470,204 L478,200 L492.5,187 L507.5,172.5 L526,153" stroke="#a6bf9a" stroke-width="2.6" filter="url(#b05)"/><path d="M480,196 L492,185 L506,171 L523,153" stroke="#b8dc9c" stroke-width="2" filter="url(#b05)" transform="translate(-3,-2)"/>
<path d="M352,350 L378,371 L402,388" stroke="#8ea682" stroke-width="10" filter="url(#b1)"/>
<path d="M330,330 L352,350 M402,388 L430,405" stroke="#92aa84" stroke-width="7" filter="url(#b1)"/>
<path d="M258,266 L282,283 L312,311 L350,346 L390,378 L435,407 L475,436 L510,466 L532,483" stroke="#98b08a" stroke-width="6" filter="url(#b05)"/>
<path d="M258,266 L282,283 L312,311 L350,346 L390,378 L435,407 L475,436 L510,466 L532,483" stroke="#b4c8a4" stroke-width="2"/>
<path d="M532,483 L582,471 L620,465 L665,452 L707,440 L756,427 L790,416 L870,386 L928,372 L962,366" stroke="#b2caa0" stroke-width="3.5" filter="url(#b05)"/>
<path d="M768,427 L870,392 L928,378" stroke="#b6dca0" stroke-width="4" filter="url(#b1)"/>
<path d="M435,224 L455,240 L467,252" stroke="#b0d8a0" stroke-width="2" filter="url(#b05)"/>
<path d="M506,250 L576,240 L608,212 L638,190" stroke="#b8e0a4" stroke-width="1.6" filter="url(#b05)"/>
<path d="M512,346 L593,316 L655,282 L732,247 L784,221" stroke="#569650" stroke-width="1" opacity=".7"/>
<path d="M789,417 L815,432 L843,445 L868,457 L880,458" stroke="#b8dca0" stroke-width="1.5" filter="url(#b05)"/>
<path d="M915,335 L930,372" stroke="#b4d4a0" stroke-width="3" filter="url(#b05)"/>
<path d="M630,583 L612,572 L603,560 L605,550 L617,540 L640,530 L675,522 L700,524 L725,532 L756,545" stroke="#c4e2b0" stroke-width="2.4" filter="url(#b05)"/>
<path d="M700,527 L755,544" stroke="#b4dca0" stroke-width="1.2"/>
<path d="M497,446 L545,431 L597,417" stroke="#c6e2a2" stroke-width="1.3" filter="url(#b05)"/>
</g>
<!-- water -->
<g filter="url(#b1)">
<path d="M282,432.5 L295,419 L317.5,409 L340,401 L351,395 L369,383 L382.5,385 L389,391 L387.5,395 L374,402.5 L357.5,409 L350,420 L347.5,435 L340,444 L322.5,449 L307.5,449 L291,444 L282.5,436 Z" fill="#a5d4cd"/>
<ellipse cx="324" cy="436" rx="24" ry="11" fill="url(#pondg)"/>
<ellipse cx="324" cy="440.6" rx="14" ry="5.5" fill="#8a9cc4"/>
<ellipse cx="324" cy="434.4" rx="13" ry="6" fill="#1e32d4"/>
<path d="M400,332 L405,335 L403,345 L412,348 L414,357 L405,360 L398,355 L398,347 L392,340 Z" fill="#5a6cc0"/>
<path d="M404,385 L416,381 L428,379" stroke="#b4d4d8" stroke-width="5" fill="none"/>
<path d="M420,372 L435,378 L457,380 L477,379 L495,376 L520,382 L540,392 L560,391 L580,396 L600,404 L620,414 L637,422 L652,432 L670,442 L690,465 L700,477 L705,492 L725,499 L750,507 L775,517 L795,520 L815,522 L835,517" stroke="#b4cadc" stroke-width="7" fill="none" stroke-linejoin="round"/>
<path d="M420,372 L435,378 L457,380 L477,379 L495,376 L520,382 L540,392 L560,391 L580,396 L600,404 L620,414 L637,422 L652,432 L670,442 L690,465 L700,477 L705,492 L725,499 L750,507 L775,517 L795,520 L815,522" stroke="#7890d0" stroke-width="2.4" fill="none" stroke-linejoin="round" stroke-dasharray="14 5 9 7 20 6"/>
<path d="M478,374 L500,372 L505,380 L480,382 Z" fill="#6074c4"/>
<path d="M661,432 L675,436 L690,445 L682,450 L668,450 L660,442 Z" fill="#b8ccd8"/>
<path d="M818,492 L828,488 L836,505 L842,518 L828,520 Z" fill="#cfe0e8"/>
<path d="M586,202 L593,204 L592,222 L587,222 Z" fill="#9eb0c8"/>
<path d="M476,270 L486,268 L490,280 L478,284 Z" fill="#a8b8d0"/>
<path d="M455,296 L470,290 L472,296 L458,302 Z" fill="#a8b8d0"/>
</g>
<path d="M282,432.5 L295,419 L317.5,409 L340,401 L351,395 L369,383 L382.5,385 L389,391 L387.5,395 L374,402.5 L357.5,409 L350,420 L347.5,435 L340,444 L322.5,449 L307.5,449 L291,444 L282.5,436 Z" fill="url(#dots)" opacity=".8"/>
<ellipse cx="324" cy="434.4" rx="12.5" ry="5.6" fill="#1e32d4" filter="url(#b05)"/>
<!-- dark ponds -->
<g filter="url(#b05)" fill="#06080c">
<path d="M775,331 L779,330 L786,336 L796,342 L806,349 L813,360 L822,368 L836,372 L850,378 L856,383 L848,388 L832,388 L818,381 L808,370 L802,356 L794,348 L784,342 Z"/>
<path d="M825,489 L840,480 L852,472 L860,464 L870,474 L865,487 L857,497 L835,499 L825,495 Z"/>
</g>
<g filter="url(#b05)"><path d="M670,451 L690,443 L706,439 L710,449 L701,458 L687,466 L673,460 Z" fill="url(#streak)"/>
<path d="M670,451 L690,443 L706,439 L708,442 L672,455 Z" fill="#081408"/>
<g mask="url(#fm)"><path d="M706,439 L757,426 L758,433 L711,451 Z" fill="url(#streak)" opacity=".6"/></g>
<path d="M640,458 L668,451 L669,455 L642,464 Z" fill="url(#streak)" opacity=".8"/></g>
<!-- trees -->
<g filter="url(#rough)" fill="#0a140a">
<ellipse cx="267" cy="262" rx="1.6" ry="2.6"/><ellipse cx="274" cy="261" rx="2.6" ry="2.8"/>
<ellipse cx="300" cy="249" rx="3" ry="1.4"/><ellipse cx="309" cy="247" rx="4" ry="1.8"/>
<ellipse cx="331" cy="240" rx="2.2" ry="1.8"/><ellipse cx="339" cy="238" rx="4" ry="1.8"/><ellipse cx="349" cy="235" rx="2.2" ry="1.6"/>
<ellipse cx="429" cy="220" rx="4" ry="2.2"/><ellipse cx="440" cy="219" rx="1.5" ry="2.2"/>
<ellipse cx="471" cy="234" rx="5" ry="6"/><ellipse cx="462" cy="242" rx="3.4" ry="3.4"/>
<ellipse cx="459" cy="279" rx="3.4" ry="6"/><ellipse cx="474" cy="274" rx="2.5" ry="4.5"/>
<ellipse cx="488" cy="185" rx="2.5" ry="1.6"/>
<ellipse cx="495" cy="202" rx="5.5" ry="6.5"/><path d="M513,200 L520,197 L517,208 L515,216 L511,213 Z"/>
<ellipse cx="530" cy="186" rx="3.5" ry="3.5"/><ellipse cx="501" cy="226" rx="4.5" ry="5.5"/>
<ellipse cx="481" cy="236" rx="6" ry="5.5"/><rect x="511.5" y="222" width="4" height="18"/><rect x="520" y="226" width="3" height="7"/>
<path d="M545,227 L549,223 L556,220 L562,222 L568,221 L573,223 L573,229 L545,231 Z"/>
<ellipse cx="586" cy="189" rx="2.6" ry="3.2"/><ellipse cx="598" cy="187" rx="3" ry="3.2"/>
<ellipse cx="575" cy="240" rx="4.5" ry="4.5"/>
<path d="M618,189 L628,186 L641,184 L641,186 L622,191 Z"/>
<ellipse cx="698" cy="265" rx="7" ry="3"/>
<path d="M477,253 L486,253 L487,270 L478,270 Z"/><path d="M490,254 L496,253 L497,265 L491,266 Z"/>
<ellipse cx="499" cy="268" rx="4" ry="2.5"/>
<path d="M477,309 L485,306 L490,317 L484,321 Z"/><path d="M497,306 L504,303 L504,311 Z"/>
<path d="M477,338 L483,335 L487,346 L482,351 Z"/>
<ellipse cx="450" cy="366" rx="2.5" ry="4.5"/><ellipse cx="461" cy="368" rx="2" ry="4.5"/><ellipse cx="474" cy="375" rx="2.6" ry="4.5"/><ellipse cx="492" cy="366" rx="1.2" ry="4.5"/>
<ellipse cx="344" cy="331" rx="2.6" ry="1.8"/>
<ellipse cx="241" cy="397" rx="5" ry="6"/><ellipse cx="242" cy="412" rx="7" ry="6"/><ellipse cx="249" cy="431" rx="4" ry="2.2"/>
<ellipse cx="629" cy="414" rx="4.5" ry="4.5"/><ellipse cx="552" cy="447" rx="5" ry="2.2"/>
<ellipse cx="808" cy="313" rx="3" ry="4.5"/><ellipse cx="815" cy="308" rx="2.6" ry="2"/>
<path d="M779,346 L785,350 L792,358 L797,364 L793,364 L783,354 Z"/>
<path d="M911,333 L914,342 L919,362 L917,362 Z"/><path d="M922,345 L927,352 L931,362 L929,364 Z"/>
<ellipse cx="960" cy="378" rx="9" ry="3.8"/><ellipse cx="967" cy="373" rx="6" ry="3.4"/>
<ellipse cx="869" cy="415" rx="5" ry="2.4"/><ellipse cx="869" cy="385" rx="3.5" ry="2.4"/>
<ellipse cx="854" cy="435" rx="4.5" ry="2.6"/><rect x="853.3" y="436" width="1.4" height="8"/>
<path d="M870,448 L890,453 L920,456 L918,461 L890,459 L872,454 Z"/>
<path d="M851,458 L862,456 L874,462 L870,467 L853,465 Z"/>
<ellipse cx="873" cy="470" rx="4" ry="5"/>
<path d="M621,461 L628,457 L640,456 L655,453 L659,456 L640,461 L623,465 Z"/>
<ellipse cx="722" cy="494" rx="2.6" ry="4.5"/><ellipse cx="728" cy="496" rx="2.6" ry="3.6"/><ellipse cx="739" cy="496" rx="2.2" ry="3.6"/><ellipse cx="749" cy="498" rx="2.2" ry="3.6"/>
<ellipse cx="764" cy="507" rx="3.6" ry="3.6"/><path d="M786,505 L793,501 L803,503 L809,512 L805,517 L792,515 Z"/><ellipse cx="781" cy="514" rx="2.6" ry="2.6"/>
<ellipse cx="825" cy="513" rx="4.5" ry="4.5"/><ellipse cx="735" cy="505" rx="5.5" ry="2.6"/>
<ellipse cx="687" cy="554" rx="6" ry="3"/><ellipse cx="660" cy="567" rx="9" ry="4"/>
<ellipse cx="663" cy="446" rx="4.5" ry="4.5"/>
<path d="M394,404 L410,401 L432,405 L443,410 L440,415 L420,411 L400,409 Z"/>
<path d="M608,481 L625,479 L640,483 L654,488 L650,493 L636,496 L639,507 L631,509 L629,496 L611,486 Z"/>
<ellipse cx="556" cy="489" rx="2.6" ry="5.5"/>
</g>
<g filter="url(#b05)">
<rect x="432" y="412" width="7" height="3" fill="#e05040"/><rect x="414" y="404" width="8" height="2" fill="#f0f0f0"/><rect x="650" y="491" width="6" height="3" fill="#d85848"/><rect x="640" y="487" width="6" height="2" fill="#f0f0f0"/>
</g>
<rect x="220" y="140" width="800" height="450" filter="url(#mottle)" style="mix-blend-mode:soft-light" opacity=".3"/>
<rect x="220" y="140" width="800" height="450" filter="url(#grain)" style="mix-blend-mode:soft-light" opacity=".55"/>
</g>
</svg>

<svg class="abs" style="left:0;top:0" width="1024" height="704" viewBox="0 0 1024 704" font-family="Liberation Sans, sans-serif" font-weight="bold" fill="#1a5a80">
<text x="204.5" y="67.5" font-size="10.5" letter-spacing="0.15">Water Depth (metres)</text>
<rect x="204.4" y="73.75" width="13" height="5.65" fill="#1818ec" stroke="#30304a" stroke-width="0.7"/>
<rect x="204.4" y="79.40" width="13" height="11.00" fill="#2222ee" stroke="#30304a" stroke-width="0.7"/>
<rect x="204.4" y="90.40" width="13" height="11.00" fill="#4448f4" stroke="#30304a" stroke-width="0.7"/>
<rect x="204.4" y="101.40" width="13" height="11.00" fill="#6070f4" stroke="#30304a" stroke-width="0.7"/>
<rect x="204.4" y="112.40" width="13" height="11.00" fill="#809af8" stroke="#30304a" stroke-width="0.7"/>
<rect x="204.4" y="123.40" width="13" height="11.00" fill="#a0b8ea" stroke="#30304a" stroke-width="0.7"/>
<rect x="204.4" y="134.40" width="13" height="11.00" fill="#a8c2f0" stroke="#30304a" stroke-width="0.7"/>
<rect x="204.4" y="145.40" width="13" height="11.00" fill="#b4d0f0" stroke="#30304a" stroke-width="0.7"/>
<rect x="204.4" y="156.40" width="13" height="11.00" fill="#c4dcf0" stroke="#30304a" stroke-width="0.7"/>
<rect x="204.4" y="167.40" width="13" height="11.00" fill="#d4e2f2" stroke="#30304a" stroke-width="0.7"/>
<rect x="204.4" y="178.40" width="13" height="11.00" fill="#dde4f2" stroke="#30304a" stroke-width="0.7"/>
<rect x="204.4" y="189.40" width="13" height="5.90" fill="#e4e8f4" stroke="#30304a" stroke-width="0.7"/>
<text x="222" y="84.0" font-size="10">2.5</text>
<text x="222" y="106.0" font-size="10">2.0</text>
<text x="222" y="128.0" font-size="10">1.5</text>
<text x="222" y="150.0" font-size="10">1.0</text>
<text x="222" y="172.0" font-size="10">0.5</text>
<text x="222" y="194.0" font-size="10">0.0</text>
<text x="204.4" y="214.8" font-size="10.5" letter-spacing="0.17">Velocity Vector</text>
<text x="207.5" y="231.6" font-size="10">3.00 m/s</text><text x="207.5" y="244.6" font-size="10">0.00 m/s</text>
<path d="M251,227.6 L270,227.6" stroke="#222" stroke-width="1"/><path d="M269,223.6 L277.5,227.6 L269,231.6 Z" fill="#222"/><path d="M251.5,240 L254,240" stroke="#777" stroke-width=".8"/>
<text x="204.5" y="612.8" font-size="12" letter-spacing="0.06">TUFLOW Tutorial - SMS 3D Animation</text>
<g><circle cx="217" cy="638" r="9.5" fill="none" stroke="#1d6a86" stroke-width="2.6" stroke-dasharray="2.2 1.3"/><path d="M214,628.5 A10,10 0 0 1 227,640 L222,646 A8,8 0 0 1 213,637 Z" fill="#52e6b4"/><circle cx="216.5" cy="638.5" r="3.4" fill="#fcfcfc"/>
<text x="226.5" y="647.6" font-size="10.8" fill="#1d6a86" letter-spacing="0.3">BMT</text><text x="254.5" y="647.6" font-size="10.5" font-weight="normal" fill="#3b86a0" letter-spacing="-0.6">WBM</text></g>
<text x="288.5" y="639.5" font-size="15.2" font-weight="normal" fill="#1f6f96" textLength="57" lengthAdjust="spacingAndGlyphs"><tspan font-weight="bold">TU</tspan>FLOW</text>
<g fill="none" stroke-linecap="round"><path d="M352,631 Q358,627 366,630 T387,629" stroke="#9cc8e0" stroke-width="1.6"/><path d="M352,635 Q360,631.5 368,634.5 T387,633.5" stroke="#2d7fa6" stroke-width="1.8"/><path d="M353,639 Q361,636 369,638.5 T386,638" stroke="#1f6f96" stroke-width="1.6"/></g>
<text x="290" y="648.6" font-size="4.6" fill="#4a88a8" letter-spacing="0.05">Flood and Tide Simulation Software</text>
</svg>
<div id="status" class="abs"><span class="abs" style="left:2px;top:0px;font-size:8px;line-height:10px;color:#333;transform:scaleX(.85);transform-origin:0 0">(?, ?)</span><div class="abs" style="left:232px;top:1px;width:1px;height:9px;background:#c4c4c4"></div><div class="abs" style="left:234px;top:1px;width:1px;height:9px;background:#c4c4c4"></div></div>
<div id="btool" class="abs"></div>
<div id="bottom" class="abs"></div>
<svg class="abs" style="left:0px;top:1px" width="12" height="12" viewBox="0 0 12 12"><rect x="0.5" y="0.5" width="11" height="11" fill="#f4f6fb" stroke="#2a4a9a" stroke-width="1"/><path d="M1,8 L4,5.5 L6,7 L9,3 L11,5 L11,8 Z" fill="#2d5fb0"/><rect x="1" y="9" width="10" height="2" fill="#2d5fb0"/></svg>
<svg class="abs" style="left:5px;top:16px" width="11" height="11" viewBox="0 0 11 11"><path d="M2.5,0.5 L8,0.5 L10.5,3 L10.5,10.5 L2.5,10.5 Z" fill="#fff" stroke="#9aa2b8" stroke-width=".7"/><path d="M0,7.5 L3,5 L5,6.5 L8,3.5 L9.5,5 L9.5,7.5 Z" fill="#2d5fb0"/><rect x="1.5" y="8.5" width="8" height="1.6" fill="#2d5fb0"/></svg>
<div class="abs" style="left:1px;top:31px;width:1px;height:1px;background:#9aa0b0;box-shadow:0 3px 0 #9aa0b0,0 6px 0 #9aa0b0,0 9px 0 #9aa0b0"></div>
<div class="abs" style="left:67px;top:31px;width:1px;height:1px;background:#9aa0b0;box-shadow:0 3px 0 #9aa0b0,0 6px 0 #9aa0b0,0 9px 0 #9aa0b0"></div>
<div class="abs" style="left:64px;top:30px;width:1px;height:12px;background:#b9bdca"></div><div class="abs" style="left:65px;top:30px;width:1px;height:12px;background:#fff"></div>
<div class="abs" style="left:131px;top:30px;width:1px;height:12px;background:#b9bdca"></div><div class="abs" style="left:132px;top:30px;width:1px;height:12px;background:#fff"></div>
<div class="abs" style="left:135px;top:30px;width:1px;height:12px;background:#c9ccd6"></div>
<svg class="abs" style="left:6px;top:30px" width="12" height="12" viewBox="0 0 12 12"><path d="M0.5,3.5 L4,3.5 L5,4.5 L9,4.5 L9,10.5 L0.5,10.5 Z" fill="#e8c860" stroke="#b08a2a" stroke-width=".7"/><path d="M0.5,10.5 L2.5,6 L11.5,6 L9,10.5 Z" fill="#f6de8a" stroke="#b08a2a" stroke-width=".6"/><path d="M6.5,3 Q8,0.8 10,2 L10.8,1 L10.8,3.8 L8.2,3.6 L9.2,2.8 Q8,2.2 7.2,3.4 Z" fill="#2a6ac0"/></svg>
<svg class="abs" style="left:21px;top:30px" width="12" height="12" viewBox="0 0 12 12"><rect x="0.5" y="0.5" width="11" height="11" rx="1" fill="#2f6fd0" stroke="#1a3f8a" stroke-width=".8"/><rect x="2.5" y="1" width="7" height="4.5" fill="#e8eef8"/><rect x="3" y="7.5" width="6" height="4" fill="#1a3f8a"/><rect x="4" y="8.3" width="2" height="2.6" fill="#dfe6f2"/></svg>
<svg class="abs" style="left:35.5px;top:30px" width="12" height="12" viewBox="0 0 12 12"><path d="M3.5,1 L9.5,1 L10.5,5 L2.5,5 Z" fill="#fff" stroke="#8a94a8" stroke-width=".6"/><path d="M0.8,5.5 Q0.8,4.5 2,4.5 L10,4.5 Q11.2,4.5 11.2,5.5 L11.2,9 Q11.2,10 10,10 L2,10 Q0.8,10 0.8,9 Z" fill="#aab8d4" stroke="#54648a" stroke-width=".7"/><rect x="3" y="7.5" width="6" height="3.5" fill="#e8e08a" stroke="#6a7494" stroke-width=".5"/></svg>
<svg class="abs" style="left:51px;top:30px" width="12" height="12" viewBox="0 0 12 12"><path d="M2,3.5 L10,3.5 L9.2,11.5 L2.8,11.5 Z" fill="#2a2a2a" stroke="#000" stroke-width=".6"/><rect x="1.2" y="1.8" width="9.6" height="1.9" rx=".8" fill="#3a3a3a" stroke="#000" stroke-width=".5"/><rect x="4.5" y="0.5" width="3" height="1.5" fill="#222"/><path d="M4.3,5 L4.6,10.5 M6,5 L6,10.5 M7.7,5 L7.4,10.5" stroke="#888" stroke-width=".7"/></svg>
<svg class="abs" style="left:72.5px;top:30px" width="11" height="12" viewBox="0 0 11 12"><path d="M0.5,0.5 L7.5,0.5 L10.5,3.5 L10.5,11.5 L0.5,11.5 Z" fill="#fbfcfe" stroke="#8a92a8" stroke-width=".7"/><path d="M2.5,6 Q3,3 6,3.2 L6,2 L8.5,4 L6,5.8 L6,4.8 Q4.2,4.6 4,6 Z" fill="#1f9a3c"/><path d="M8.5,7 Q8,10 5,9.8 L5,11 L2.5,9 L5,7.2 L5,8.2 Q6.8,8.4 7,7 Z" fill="#1f9a3c"/></svg>
<svg class="abs" style="left:87px;top:30px" width="12" height="12" viewBox="0 0 12 12"><circle cx="5.2" cy="5.2" r="4.3" fill="#dfeaf6" stroke="#2a2f3a" stroke-width="1.3"/><path d="M8.3,8.3 L11.3,11.3" stroke="#c07818" stroke-width="1.8" stroke-linecap="round"/><path d="M3,4.4 L3,3 L4.4,3 M6,3 L7.4,3 L7.4,4.4 M7.4,6 L7.4,7.4 L6,7.4 M4.4,7.4 L3,7.4 L3,6" stroke="#333" stroke-width=".8" fill="none"/></svg>
<svg class="abs" style="left:103px;top:30px" width="10" height="12" viewBox="0 0 10 12"><path d="M1.5,1 L8.5,0.5 L8.5,7.5 L1.5,8 Z" fill="#6fc0f4" stroke="#8a9cc8" stroke-width=".7"/><path d="M3,9 L7,9 L8.5,11.5 L1.5,11.5 Z" fill="#c8cce8" stroke="#9aa0c8" stroke-width=".5"/></svg>
<svg class="abs" style="left:117px;top:30px" width="12" height="12" viewBox="0 0 12 12"><path d="M4.5,0.5 L4.5,8 L0.8,11 M4.5,8 L11.5,8" stroke="#1f56b0" stroke-width="1.4" fill="none"/><path d="M4.5,8 L8,5.5 L11,9.5 L5.5,11 Z" fill="#7ab0e8" opacity=".8"/><path d="M3.2,2 L4.5,0 L5.8,2 Z" fill="#1f56b0"/></svg>
<div class="abs" style="left:184px;top:46px;width:1px;height:1px;background:#9aa0b0;box-shadow:3px 0 0 #9aa0b0,6px 0 0 #9aa0b0,9px 0 0 #9aa0b0"></div>
<div class="abs" style="left:181px;top:95px;width:16px;height:6px;background:#d5daee"></div>
<div class="abs" style="left:184px;top:102px;width:1px;height:1px;background:#9aa0b0;box-shadow:3px 0 0 #9aa0b0,6px 0 0 #9aa0b0,9px 0 0 #9aa0b0"></div>
<div class="abs" style="left:181px;top:302px;width:15px;height:1px;background:#b9bdca"></div><div class="abs" style="left:184px;top:305px;width:1px;height:1px;background:#9aa0b0;box-shadow:3px 0 0 #9aa0b0,6px 0 0 #9aa0b0,9px 0 0 #9aa0b0"></div>
<svg class="abs" style="left:182.5px;top:51px" width="12" height="12" viewBox="0 0 12 12"><path d="M1,5 Q3,2 6,4 L9,8 Q7,11 4,9.5 Z" fill="#e8a8a0" stroke="#b86a60" stroke-width=".6"/><path d="M9,0.5 L9.8,2.4 L11.8,3 L9.8,3.6 L9,5.5 L8.2,3.6 L6.2,3 L8.2,2.4 Z" fill="#1f6fe0"/><path d="M7,9 L11,8 L10,11.5 Z" fill="#2a7fe8"/></svg>
<svg class="abs" style="left:182.5px;top:65px" width="12" height="12" viewBox="0 0 12 12"><circle cx="4.8" cy="4.8" r="3.8" fill="#e8f0fa" stroke="#2a2f3a" stroke-width="1.2"/><path d="M7.6,7.6 L11,11" stroke="#a86818" stroke-width="1.8" stroke-linecap="round"/><path d="M9.5,0.5 L9.5,3.5 M8,2 L11,2" stroke="#1f6fe0" stroke-width=".9"/></svg>
<div class="abs" style="left:182px;top:79px;width:14px;height:15px;background:#fdfdfe;border:1px solid #b8bdd0"></div>
<svg class="abs" style="left:182.5px;top:81px" width="12" height="12" viewBox="0 0 12 12"><circle cx="6" cy="3" r="2.2" fill="#e8a820" stroke="#8a5a10" stroke-width=".5"/><circle cx="3" cy="6.5" r="2.2" fill="#2a5fc0" stroke="#1a3a80" stroke-width=".5"/><circle cx="9" cy="6.5" r="2.2" fill="#e8a820" stroke="#8a5a10" stroke-width=".5"/><circle cx="6" cy="9.5" r="2.2" fill="#2a5fc0" stroke="#1a3a80" stroke-width=".5"/><circle cx="6" cy="6.2" r="1.2" fill="#222"/></svg>
<svg class="abs" style="left:182.5px;top:108px" width="12" height="12" viewBox="0 0 12 12"><circle cx="6" cy="1.5" r="0.9" fill="#111"/><circle cx="2" cy="7" r="0.9" fill="#111"/><circle cx="5" cy="10" r="0.9" fill="#111"/><circle cx="10" cy="9" r="0.9" fill="#111"/><path d="M5.5,3.5 L9.5,7 L7.6,7.2 L8.4,9.2 L7.4,9.6 L6.6,7.6 L5.5,8.8 Z" fill="#222"/></svg>
<svg class="abs" style="left:182.5px;top:122px" width="12" height="12" viewBox="0 0 12 12"><circle cx="3" cy="2.5" r="0.9" fill="#111"/><circle cx="9.5" cy="4.5" r="0.9" fill="#111"/><circle cx="1.5" cy="7" r="0.9" fill="#111"/><circle cx="6" cy="10.5" r="0.9" fill="#111"/></svg>
<svg class="abs" style="left:182.5px;top:137px" width="12" height="12" viewBox="0 0 12 12"><path d="M1,6 L6,3 L11,6" stroke="#aaa" stroke-width=".8" fill="none" stroke-dasharray="1.2 1"/><path d="M5.5,3.5 L9.5,7 L7.6,7.2 L8.4,9.2 L7.4,9.6 L6.6,7.6 L5.5,8.8 Z" fill="#999"/></svg>
<svg class="abs" style="left:182.5px;top:151.5px" width="12" height="12" viewBox="0 0 12 12"><path d="M1,8 L6,4 L11,8" stroke="#1f6fe0" stroke-width="1.3" fill="none"/><circle cx="1.2" cy="8" r="1.1" fill="#111"/><circle cx="6" cy="4" r="1.1" fill="#111"/><circle cx="10.8" cy="8" r="1.1" fill="#111"/></svg>
<svg class="abs" style="left:182.5px;top:166px" width="12" height="12" viewBox="0 0 12 12"><path d="M1,5.5 L6,1.5 L11,5.5 L8,5.5 L4,5.5 Z" fill="#fff" stroke="#1f6fe0" stroke-width="1.3"/><path d="M5.5,5.5 L9.5,9 L7.6,9.2 L8.4,11.2 L7.4,11.6 L6.6,9.6 L5.5,10.8 Z" fill="#222"/></svg>
<svg class="abs" style="left:182.5px;top:182px" width="12" height="12" viewBox="0 0 12 12"><path d="M6,1 L11,11 L1,11 Z" fill="#fff" stroke="#1f6fe0" stroke-width="1.4"/></svg>
<svg class="abs" style="left:182.5px;top:197px" width="12" height="12" viewBox="0 0 12 12"><rect x="1.5" y="1.5" width="9" height="9" fill="#fff" stroke="#1f6fe0" stroke-width="1.4"/><circle cx="1.5" cy="1.5" r="1" fill="#111"/><circle cx="10.5" cy="1.5" r="1" fill="#111"/><circle cx="1.5" cy="10.5" r="1" fill="#111"/><circle cx="10.5" cy="10.5" r="1" fill="#111"/></svg>
<svg class="abs" style="left:182.5px;top:212.5px" width="12" height="12" viewBox="0 0 12 12"><path d="M6,1 L11,11 L1,11 Z" fill="none" stroke="#aaa" stroke-width=".6" stroke-dasharray="1.2 1"/><circle cx="6" cy="1" r="0.7" fill="#111"/><circle cx="1" cy="11" r="0.7" fill="#111"/><circle cx="11" cy="11" r="0.7" fill="#111"/><circle cx="3.5" cy="6" r="0.6" fill="#111"/><circle cx="8.5" cy="6" r="0.6" fill="#111"/><circle cx="6" cy="11" r="0.6" fill="#111"/></svg>
<svg class="abs" style="left:182.5px;top:227px" width="12" height="12" viewBox="0 0 12 12"><rect x="1.5" y="1.5" width="9" height="9" fill="none" stroke="#999" stroke-width=".7" stroke-dasharray="1.2 1"/><circle cx="1.5" cy="1.5" r="0.65" fill="#111"/><circle cx="6" cy="1.5" r="0.65" fill="#111"/><circle cx="10.5" cy="1.5" r="0.65" fill="#111"/><circle cx="1.5" cy="6" r="0.65" fill="#111"/><circle cx="10.5" cy="6" r="0.65" fill="#111"/><circle cx="1.5" cy="10.5" r="0.65" fill="#111"/><circle cx="6" cy="10.5" r="0.65" fill="#111"/><circle cx="10.5" cy="10.5" r="0.65" fill="#111"/></svg>
<svg class="abs" style="left:182.5px;top:242px" width="12" height="12" viewBox="0 0 12 12"><rect x="1.5" y="1.5" width="9" height="9" fill="none" stroke="#999" stroke-width=".6" stroke-dasharray="1.2 1"/><path d="M1.5,6 L10.5,6 M6,1.5 L6,10.5" stroke="#999" stroke-width=".6" stroke-dasharray="1.2 1"/><circle cx="1.5" cy="1.5" r="0.65" fill="#111"/><circle cx="1.5" cy="6" r="0.65" fill="#111"/><circle cx="1.5" cy="10.5" r="0.65" fill="#111"/><circle cx="6" cy="1.5" r="0.65" fill="#111"/><circle cx="6" cy="6" r="0.65" fill="#111"/><circle cx="6" cy="10.5" r="0.65" fill="#111"/><circle cx="10.5" cy="1.5" r="0.65" fill="#111"/><circle cx="10.5" cy="6" r="0.65" fill="#111"/><circle cx="10.5" cy="10.5" r="0.65" fill="#111"/></svg>
<svg class="abs" style="left:182.5px;top:257px" width="12" height="12" viewBox="0 0 12 12"><rect x="1" y="1" width="4.5" height="4.5" fill="#2a7fe8" stroke="#1a4fa0" stroke-width=".5"/><rect x="6.5" y="6.5" width="4.5" height="4.5" fill="#2a7fe8" stroke="#1a4fa0" stroke-width=".5"/><path d="M3,7 L6,10 M9,5 L6,2" stroke="#333" stroke-width=".8"/></svg>
<svg class="abs" style="left:182.5px;top:272px" width="12" height="12" viewBox="0 0 12 12"><circle cx="4" cy="3" r="2" fill="#18a040"/><rect x="6.5" y="6.5" width="4.5" height="4.5" fill="#fff" stroke="#2a7fe8" stroke-width="1.1"/><path d="M6,0.5 L6,5 M3.8,2.8 L8.2,2.8" stroke="#2a7fe8" stroke-width=".9"/><path d="M2,6 L2,11 M2,8 L5,11" stroke="#333" stroke-width=".8" fill="none"/></svg>
<svg class="abs" style="left:182.5px;top:287px" width="12" height="12" viewBox="0 0 12 12"><rect x="1" y="0.5" width="10" height="2.2" fill="#e03028"/><rect x="1" y="9.3" width="10" height="2.2" fill="#28a838"/><rect x="1" y="2.7" width="10" height="6.6" fill="#f4e050"/><text x="6" y="8.6" font-size="7" font-weight="bold" text-anchor="middle" font-family="Liberation Sans, sans-serif" fill="#111" letter-spacing="-0.6">10</text></svg>
<svg class="abs" style="left:182.5px;top:307px" width="12" height="12" viewBox="0 0 12 12"><text x="6" y="6.5" font-size="7.5" font-weight="bold" text-anchor="middle" font-family="Liberation Sans, sans-serif" fill="#1f56c0">?</text><path d="M0.5,4 L3,4 M1.8,2.8 L1.8,5.2 M9,4 L11.5,4 M10.2,2.8 L10.2,5.2" stroke="#1f56c0" stroke-width=".8"/><rect x="1" y="8" width="10" height="2.6" fill="#e8c838" stroke="#8a7418" stroke-width=".5"/></svg>
<svg class="abs" style="left:182.5px;top:322px" width="12" height="12" viewBox="0 0 12 12"><rect x="0.8" y="1.5" width="10.4" height="7" fill="#2a7fe8" stroke="#1a4fa0" stroke-width=".6"/><path d="M2,3 L4.5,7 L6,4 L8,7.5 L10,3" stroke="#f0d020" stroke-width="1.2" fill="none"/><path d="M4,4 L7,7" stroke="#e03080" stroke-width="1.1"/><path d="M6.5,7 L9.5,10 L8,10.2 L8.6,11.8 L7.8,12 L7.2,10.5 L6.5,11.4 Z" fill="#222"/></svg>
<div class="abs" style="left:0;top:674px;width:124.5px;height:16px;background:linear-gradient(180deg,#fdfdfe,#eff1f7)"></div>
<div class="abs" style="left:1px;top:677px;width:1px;height:1px;background:#9aa0b0;box-shadow:0 3px 0 #9aa0b0,0 6px 0 #9aa0b0,0 9px 0 #9aa0b0"></div>
<div class="abs" style="left:4.5px;top:675px;width:14.5px;height:15px;background:#fdfdfe;border:1px solid #c4c8d8"></div>
<svg class="abs" style="left:7px;top:677px" width="11" height="12" viewBox="0 0 11 12"><path d="M5.5,0.8 L10.5,5 L9.5,11 L1.5,11 L0.5,5 Z" fill="#7a9ab8" stroke="#1d3048" stroke-width="1"/><path d="M5.5,0.8 L5.5,11 M0.5,5 L10.5,5 M1.5,11 L5.5,5 L9.5,11 M3,8 L8,8" stroke="#c8e0f0" stroke-width=".5" fill="none"/></svg>
<svg class="abs" style="left:20.5px;top:677px" width="12" height="12" viewBox="0 0 12 12"><rect x="0.5" y="0.5" width="11" height="11" fill="#1c5a24" stroke="#0c2a10" stroke-width=".8"/><path d="M4,0.5 L4,11.5 M8,0.5 L8,11.5 M0.5,4 L11.5,4 M0.5,8 L11.5,8" stroke="#0a1c0c" stroke-width=".8"/><g fill="#3fae4c"><rect x="1.2" y="1.2" width="2.2" height="2.2"/><rect x="4.9" y="1.2" width="2.2" height="2.2"/><rect x="8.8" y="1.2" width="2.2" height="2.2"/><rect x="1.2" y="4.9" width="2.2" height="2.2"/><rect x="4.9" y="4.9" width="2.2" height="2.2"/><rect x="8.8" y="4.9" width="2.2" height="2.2"/><rect x="1.2" y="8.8" width="2.2" height="2.2"/><rect x="4.9" y="8.8" width="2.2" height="2.2"/><rect x="8.8" y="8.8" width="2.2" height="2.2"/></g></svg>
<svg class="abs" style="left:35.5px;top:677px" width="12" height="12" viewBox="0 0 12 12"><rect x="0.5" y="0.5" width="11" height="11" fill="#f08a88" stroke="#6a2a2a" stroke-width=".8"/><rect x="1.5" y="1.5" width="4" height="4" fill="#f8c0c0"/><circle cx="3.5" cy="3" r="0.9" fill="#111"/><circle cx="9" cy="3.5" r="0.9" fill="#111"/><circle cx="6" cy="9" r="0.9" fill="#111"/></svg>
<svg class="abs" style="left:51px;top:677px" width="11" height="12" viewBox="0 0 11 12"><path d="M5.5,0.5 L6.8,4.7 L11,6 L6.8,7.3 L5.5,11.5 L4.2,7.3 L0,6 L4.2,4.7 Z" fill="#f06a10" stroke="#b83c08" stroke-width=".4"/><circle cx="5.5" cy="6" r="1.3" fill="#fff" stroke="#333" stroke-width=".5"/><rect x="8" y="0.5" width="3" height="3" fill="#333"/></svg>
<svg class="abs" style="left:66px;top:677px" width="12" height="12" viewBox="0 0 12 12"><circle cx="6" cy="6" r="5.4" fill="#1f5fd8" stroke="#123a90" stroke-width=".6"/><path d="M3,2 Q6,1 7,3 Q6,5.5 4,5 Q2,6 2,4 Z M6,7 Q9,5.5 10,7.5 Q9,10 7,10 Z M2.5,8 Q4,7.5 4.5,9.5 Q3.5,10 2.5,8 Z" fill="#2fb840"/></svg>
<svg class="abs" style="left:81px;top:677px" width="10" height="12" viewBox="0 0 10 12"><path d="M2,5 Q5,7 3,10 M6,2 Q9,4 7.5,8" stroke="#888" stroke-width="1" fill="none"/><circle cx="2.2" cy="4.2" r="1.1" fill="#666"/><circle cx="6.2" cy="1.4" r="1.1" fill="#666"/></svg>
<svg class="abs" style="left:95.5px;top:677px" width="12" height="12" viewBox="0 0 12 12"><text x="0.5" y="6.5" font-size="8" font-weight="bold" font-family="Liberation Sans, sans-serif" fill="#222">T</text><circle cx="8.2" cy="5.5" r="2.8" fill="#fff" stroke="#18a040" stroke-width="1.4"/><rect x="1.5" y="8" width="7" height="3.5" fill="#3a8fe0" stroke="#1f5fb0" stroke-width=".5"/><rect x="3" y="9" width="4" height="1.3" fill="#dceafc"/></svg>
<svg class="abs" style="left:111px;top:677px" width="12" height="12" viewBox="0 0 12 12"><rect x="0.5" y="0.5" width="11" height="11" fill="#2f7fd6" stroke="#1a4a90" stroke-width=".6"/><path d="M0.5,11.5 L0.5,6 L4.5,3.5 L11.5,8.5 L11.5,11.5 Z" fill="#247a30"/><path d="M0.5,11.5 L0.5,9 L6,7.5 L11.5,10.5 L11.5,11.5 Z" fill="#6ac050"/><path d="M7,2 L11,2 L11,5 Z" fill="#f4e060"/></svg>
<div class="abs" style="left:199.5px;top:674px;width:81px;height:16px;background:linear-gradient(180deg,#fdfdfe,#eff1f7);border-right:1px solid #c9ccd8"></div>
<div class="abs" style="left:201px;top:677px;width:1px;height:1px;background:#9aa0b0;box-shadow:0 3px 0 #9aa0b0,0 6px 0 #9aa0b0,0 9px 0 #9aa0b0"></div>
<svg class="abs" style="left:208px;top:677px" width="8" height="12" viewBox="0 0 8 12"><path d="M4,0.5 Q6.8,1 7,5 Q7.4,8.5 4,9 Q0.6,8.5 1,5 Q1.2,1 4,0.5 Z" fill="#f4d848" stroke="#d0a820" stroke-width=".6" transform="translate(0,1)"/><rect x="3" y="0.2" width="2" height="1.6" fill="#8a8a8a"/></svg>
<svg class="abs" style="left:222.5px;top:677px" width="11" height="12" viewBox="0 0 11 12"><rect x="0.5" y="1" width="9.5" height="9.5" fill="#e83020"/><path d="M0.5,1 L6,1 L10,5.5 L6,10.5 L0.5,10.5 Z" fill="#f0d020"/><path d="M0.5,1 L3.5,1 L7.5,5.5 L3.5,10.5 L0.5,10.5 Z" fill="#28a838"/><path d="M0.5,3 L3.5,5.8 L0.5,8.5 Z" fill="#2050d0"/></svg>
<svg class="abs" style="left:237px;top:677px" width="12" height="12" viewBox="0 0 12 12"><path d="M4,0.5 L4,10 M2.5,2 L4,0.5 L5.5,2 M2.5,8.5 L4,10 L5.5,8.5" stroke="#18a040" stroke-width="1.1" fill="none"/><path d="M0.5,8.5 L10,8.5 M8.5,7 L10,8.5 L8.5,10" stroke="#1f56c0" stroke-width="1.1" fill="none"/><path d="M5.5,4 Q8,1.5 10.5,3.5 L10.5,6 L8,6 Q7,4 5.5,4 Z" fill="#333"/></svg>
<svg class="abs" style="left:252px;top:677px" width="12" height="12" viewBox="0 0 12 12"><rect x="1" y="4" width="8" height="7" fill="#dde6f4" stroke="#6a7ab0" stroke-width=".7"/><path d="M2.5,10 L2.5,7 M4.5,10 L4.5,6 M6.5,10 L6.5,7.5" stroke="#6a7ab0" stroke-width="1"/><path d="M3,3.5 Q5,1 8,2.5 L9,4.5 L4,5 Z" fill="#e8a8a0"/><rect x="9" y="0.5" width="2.4" height="5" fill="#1f4fb0"/></svg>
<svg class="abs" style="left:267px;top:677px" width="12" height="12" viewBox="0 0 12 12"><path d="M1,0.5 L1,11 L11.5,11" stroke="#333" stroke-width="1" fill="none"/><rect x="2" y="4" width="2.2" height="6.5" fill="#2a5fd0"/><rect x="4.8" y="2" width="2.2" height="8.5" fill="#e8b820"/><rect x="7.6" y="3" width="2.2" height="7.5" fill="#d83020"/></svg>
</body></html>
